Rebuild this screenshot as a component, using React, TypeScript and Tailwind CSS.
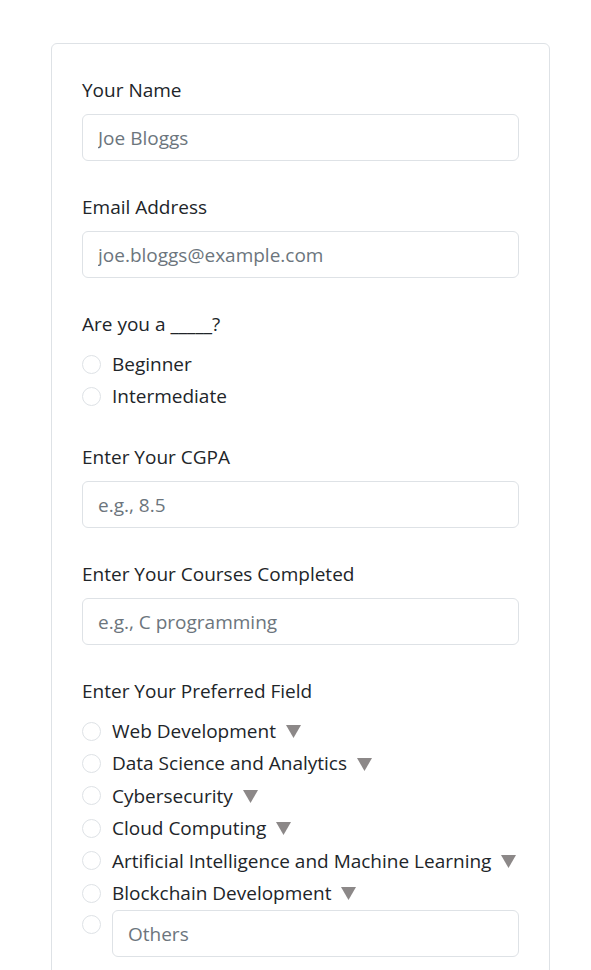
import React from "react";

const fields = [
	"Web Development",
	"Data Science and Analytics",
	"Cybersecurity",
	"Cloud Computing",
	"Artificial Intelligence and Machine Learning",
	"Blockchain Development",
];

function Radio() {
	return <span className="block w-[19px] h-[19px] shrink-0 rounded-full border border-[#dee2e6] bg-white" />;
}

function Caret() {
	return (
		<svg width="15" height="14" viewBox="0 0 15 14" className="ml-[10px] shrink-0">
			<polygon points="0,1 15,1 7.5,14" fill="#8c8888" />
		</svg>
	);
}

function TextField({ label, placeholder }: { label: string; placeholder: string }) {
	return (
		<div className="mb-[32px]">
			<label className="block mb-[10px] leading-[28px]">{label}</label>
			<input
				placeholder={placeholder}
				className="block w-full h-[47px] px-[15px] rounded-[6px] border border-[#dee2e6] outline-none placeholder:text-[#6c757d] text-[#212529]"
			/>
		</div>
	);
}

export default function App() {
	return (
		<div
			className="min-h-screen bg-white pt-[43px] pl-[51px] text-[19px] text-[#212529]"
			style={{ fontFamily: '"Open Sans", "Noto Sans", sans-serif' }}
		>
			<div className="w-[499px] border border-[#dee2e6] rounded-[6px] px-[30px] pt-[32px] pb-[30px]">
				<TextField label="Your Name" placeholder="Joe Bloggs" />
				<TextField label="Email Address" placeholder="joe.bloggs@example.com" />

				<div className="mb-[31px]">
					<label className="block mb-[10px] leading-[28px]">Are you a _____?</label>
					{["Beginner", "Intermediate"].map((level) => (
						<div key={level} className="flex items-center h-[32px]">
							<Radio />
							<span className="ml-[11px]">{level}</span>
						</div>
					))}
				</div>

				<TextField label="Enter Your CGPA" placeholder="e.g., 8.5" />
				<TextField label="Enter Your Courses Completed" placeholder="e.g., C programming" />

				<div>
					<label className="block mb-[10px] leading-[28px]">Enter Your Preferred Field</label>
					{fields.map((f) => (
						<div key={f} className="flex items-center h-[32.4px]">
							<Radio />
							<span className="ml-[11px] whitespace-nowrap">{f}</span>
							<Caret />
						</div>
					))}
					<div className="flex items-start mt-[1px]">
						<span className="mt-[5px]">
							<Radio />
						</span>
						<input
							placeholder="Others"
							className="ml-[11px] block w-full h-[47px] px-[15px] rounded-[6px] border border-[#dee2e6] outline-none placeholder:text-[#6c757d]"
						/>
					</div>
				</div>
			</div>
		</div>
	);
}
